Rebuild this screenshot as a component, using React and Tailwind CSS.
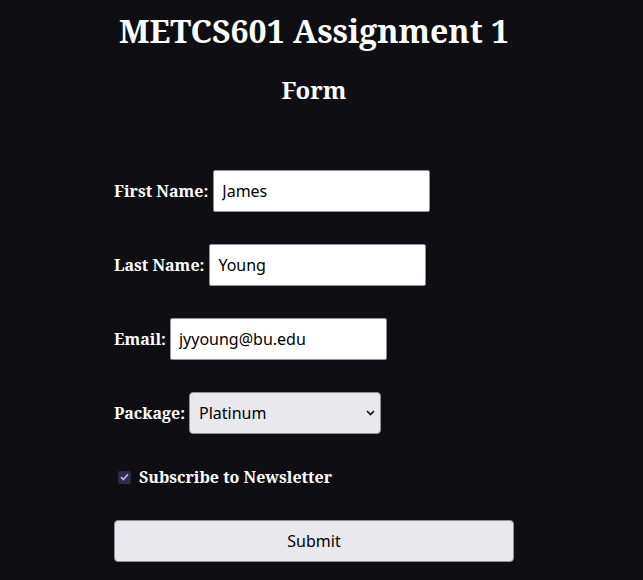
import React, { useState } from 'react';

const serif = "font-['Noto_Serif',serif]";
const sans = "font-['Noto_Sans',sans-serif]";

const Field = ({ label, value, gap = 'gap-[5px]' }) => (
  <div className={`flex items-center ${gap}`}>
    <label className={`${serif} font-bold text-base text-white`}>{label}</label>
    <input
      defaultValue={value}
      className={`${sans} w-[217px] h-[42px] bg-white text-black text-base px-[8px] border border-[#8f8f9d] rounded-[2px] outline-none`}
    />
  </div>
);

const App = () => {
  const [checked, setChecked] = useState(true);

  return (
    <div className="min-h-[580px] w-full bg-[#0f0e13]">
      <div className="w-[628px] flex flex-col items-center">
        <h1 className={`${serif} font-bold text-[32px] leading-[44px] text-white mt-[9px]`}>
          METCS601 Assignment 1
        </h1>
        <h2 className={`${serif} font-bold text-[24px] leading-[32px] text-white mt-[21px]`}>
          Form
        </h2>

        {/* form */}
        <form className="w-[400px] flex flex-col gap-8 mt-[64px]" onSubmit={(e) => e.preventDefault()}>
          <Field label="First Name:" value="James" />
          <Field label="Last Name:" value="Young" />
          <Field label="Email:" value="jyyoung@bu.edu" gap="gap-[4px]" />

          <div className="flex items-center gap-[4px]">
            <label className={`${serif} font-bold text-base text-white`}>Package:</label>
            <div className="relative">
              <select
                defaultValue="Platinum"
                className={`${sans} appearance-none w-[192px] h-[42px] bg-[#e9e8ed] text-black text-base pl-[9px] pr-6 border border-[#8f8f9d] rounded-[4px] outline-none`}
              >
                <option>Basic</option>
                <option>Gold</option>
                <option>Platinum</option>
              </select>
              <svg className="absolute right-[6px] top-[18px] pointer-events-none" width="9" height="6" viewBox="0 0 9 6">
                <path d="M1 1l3.5 3.5L8 1" fill="none" stroke="#111" strokeWidth="1.6" />
              </svg>
            </div>
          </div>

          <label className="flex items-center h-[22px] gap-[8px] pl-[4px] cursor-pointer">
            <span className="relative w-[13px] h-[13px] rounded-[2px] bg-[#2e2c45] flex items-center justify-center">
              <input
                type="checkbox"
                checked={checked}
                onChange={() => setChecked(!checked)}
                className="absolute inset-0 opacity-0"
              />
              {checked && (
                <svg width="9" height="8" viewBox="0 0 9 8">
                  <path d="M1 4.2l2.4 2.3L8 1.2" fill="none" stroke="#b9b6f5" strokeWidth="1.7" />
                </svg>
              )}
            </span>
            <span className={`${serif} font-bold text-base text-white`}>Subscribe to Newsletter</span>
          </label>

          <button
            type="submit"
            className={`${sans} w-[400px] h-[42px] bg-[#e9e8ed] text-black text-base border border-[#8f8f9d] rounded-[4px]`}
          >
            Submit
          </button>
        </form>
      </div>
    </div>
  );
};

export default App;
